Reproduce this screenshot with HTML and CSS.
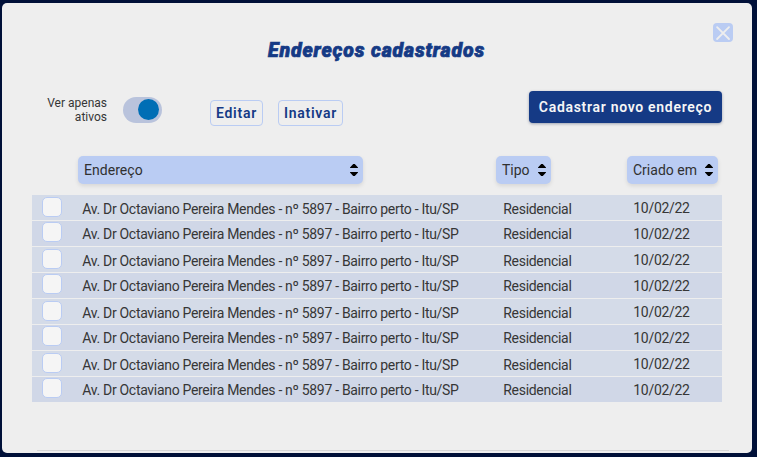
FILE: index.html
```html
<!DOCTYPE html>
<html lang="pt-BR">
<head>
<meta charset="utf-8">
<title>Endereços cadastrados</title>
<link rel="stylesheet" href="styles.css">
</head>
<body>
<main class="modal">
  <header class="header">
    <h1 class="title">Endereços cadastrados</h1>
    <button class="close" aria-label="Fechar"><svg width="20" height="20" viewBox="0 0 20 20"><path d="M4.1 4.1 16 16M16 4.1 4.1 16"/></svg></button>
  </header>
  <section class="toolbar">
    <span class="filter-label">Ver apenas<br>ativos</span>
    <span class="switch"><i class="knob"></i></span>
    <button class="outline edit">Editar</button>
    <button class="outline inactivate">Inativar</button>
    <button class="primary">Cadastrar novo endereço</button>
  </section>
  <section class="sorters">
    <button class="sorter by-address"><span>Endereço</span><svg class="arrows" width="8" height="14" viewBox="0 0 8 14"><path d="M0 5V4.4L3.2 1H4.8L8 4.4V5zM0 9H8V9.6L4.8 13H3.2L0 9.6z"/></svg></button>
    <button class="sorter by-kind"><span>Tipo</span><svg class="arrows" width="8" height="14" viewBox="0 0 8 14"><path d="M0 5V4.4L3.2 1H4.8L8 4.4V5zM0 9H8V9.6L4.8 13H3.2L0 9.6z"/></svg></button>
    <button class="sorter by-date"><span>Criado em</span><svg class="arrows" width="8" height="14" viewBox="0 0 8 14"><path d="M0 5V4.4L3.2 1H4.8L8 4.4V5zM0 9H8V9.6L4.8 13H3.2L0 9.6z"/></svg></button>
  </section>
  <section class="list">
    <div class="row"><i class="check"></i><span class="address">Av. Dr Octaviano Pereira Mendes - nº 5897 - Bairro perto - Itu/SP</span><span class="kind">Residencial</span><span class="date">10/02/22</span></div>
    <div class="row"><i class="check"></i><span class="address">Av. Dr Octaviano Pereira Mendes - nº 5897 - Bairro perto - Itu/SP</span><span class="kind">Residencial</span><span class="date">10/02/22</span></div>
    <div class="row"><i class="check"></i><span class="address">Av. Dr Octaviano Pereira Mendes - nº 5897 - Bairro perto - Itu/SP</span><span class="kind">Residencial</span><span class="date">10/02/22</span></div>
    <div class="row"><i class="check"></i><span class="address">Av. Dr Octaviano Pereira Mendes - nº 5897 - Bairro perto - Itu/SP</span><span class="kind">Residencial</span><span class="date">10/02/22</span></div>
    <div class="row"><i class="check"></i><span class="address">Av. Dr Octaviano Pereira Mendes - nº 5897 - Bairro perto - Itu/SP</span><span class="kind">Residencial</span><span class="date">10/02/22</span></div>
    <div class="row"><i class="check"></i><span class="address">Av. Dr Octaviano Pereira Mendes - nº 5897 - Bairro perto - Itu/SP</span><span class="kind">Residencial</span><span class="date">10/02/22</span></div>
    <div class="row"><i class="check"></i><span class="address">Av. Dr Octaviano Pereira Mendes - nº 5897 - Bairro perto - Itu/SP</span><span class="kind">Residencial</span><span class="date">10/02/22</span></div>
    <div class="row"><i class="check"></i><span class="address">Av. Dr Octaviano Pereira Mendes - nº 5897 - Bairro perto - Itu/SP</span><span class="kind">Residencial</span><span class="date">10/02/22</span></div>
  </section>
  <hr class="divider">
</main>
</body>
</html>
```
FILE: styles.css
```css
* { box-sizing: border-box; }
body {
  margin: 0;
  height: 457px;
  padding: 3px 5px 4px 2px;
  overflow: hidden;
  background: #001038;
  font-family: Roboto, sans-serif;
  color: #363636;
}
button { font: inherit; border: 0; padding: 0; margin: 0; }
.modal {
  height: 450px;
  padding: 20px 30px 0;
  border-radius: 5px;
  background: #eee;
  display: flex;
  flex-direction: column;
}
.header {
  height: 65px;
  display: grid;
  grid-template-columns: 236px 1fr 20px;
  margin-right: -11px;
}
.title {
  grid-column: 2;
  margin: 16px 0 0;
  font-size: 19.5px;
  line-height: 24px;
  font-weight: 900;
  font-style: italic;
  letter-spacing: 0.85px;
  -webkit-text-stroke: 0.7px #153a85;
  color: #153a85;
  white-space: nowrap;
}
.close {
  width: 20px;
  height: 19px;
  border-radius: 4px;
  background: #baccf3;
  overflow: hidden;
}
.close svg { display: block; fill: none; stroke: #eee; stroke-width: 1.8; stroke-linecap: round; }
.toolbar { height: 68px; display: flex; align-items: flex-start; }
.filter-label {
  width: 75px;
  margin-top: 8px;
  text-align: right;
  font-size: 12px;
  line-height: 14px;
}
.switch {
  width: 39px;
  height: 26px;
  margin: 9px 0 0 16px;
  padding: 2px 3px 0 15px;
  border-radius: 13px;
  background: #b9c3dc;
}
.knob { display: block; width: 21px; height: 21px; border-radius: 50%; background: #006eb5; }
.outline {
  height: 26px;
  margin-top: 12px;
  border: 1px solid #baccf3;
  border-radius: 4px;
  background: transparent;
  color: #153a85;
  font-size: 14px;
  font-weight: 600;
  letter-spacing: 0.75px;
}
.edit { width: 53px; margin-left: 48px; }
.inactivate { width: 65px; margin-left: 15px; }
.primary {
  width: 193px;
  height: 32px;
  margin: 3px 0 0 auto;
  border-radius: 4px;
  background: #153a85;
  color: #f6f6f6;
  font-size: 14px;
  font-weight: 600;
  letter-spacing: 0.7px;
  white-space: nowrap;
  box-shadow: 0 1px 3px rgba(0, 20, 60, .35);
}
.sorters { height: 39px; display: flex; padding-left: 46px; }
.sorter {
  height: 28px;
  padding: 0 5px 0 6px;
  display: flex;
  align-items: center;
  justify-content: space-between;
  border-radius: 5px;
  background: #baccf3;
  color: #303030;
  font-size: 14px;
  box-shadow: 0 2px 4px rgba(0, 0, 0, .1);
  white-space: nowrap;
}
.by-address { width: 285px; letter-spacing: 0.05px; }
.by-kind { width: 55px; margin-left: 133px; }
.by-date { width: 91px; margin-left: 76px; }
.arrows { fill: #000; }
.list { display: flex; flex-direction: column; gap: 1px; }
.row {
  height: 25px;
  padding: 1px 0 0 10px;
  display: grid;
  grid-template-columns: 40px 421px 130px 1fr;
  align-items: start;
  background: #d0d7e7;
  font-size: 14px;
  line-height: 24px;
  white-space: nowrap;
}
.row:nth-child(odd) { background: #d4dbe8; }
.row:nth-child(odd) .check,
.row:nth-child(odd) .address,
.row:nth-child(odd) .kind { margin-top: 1px; }
.check { width: 20px; height: 20px; border: 1px solid #baccf3; border-radius: 5px; background: #f5f5f5; }
.address { padding-left: 0.3px; letter-spacing: -0.31px; }
.kind { padding-left: 0.3px; letter-spacing: -0.3px; }
.date { padding-left: 0.3px; letter-spacing: -0.3px; }
.divider { width: 692px; height: 1px; margin: 48px 0 0 5px; border: 0; background: #d6d6d6; }
```
